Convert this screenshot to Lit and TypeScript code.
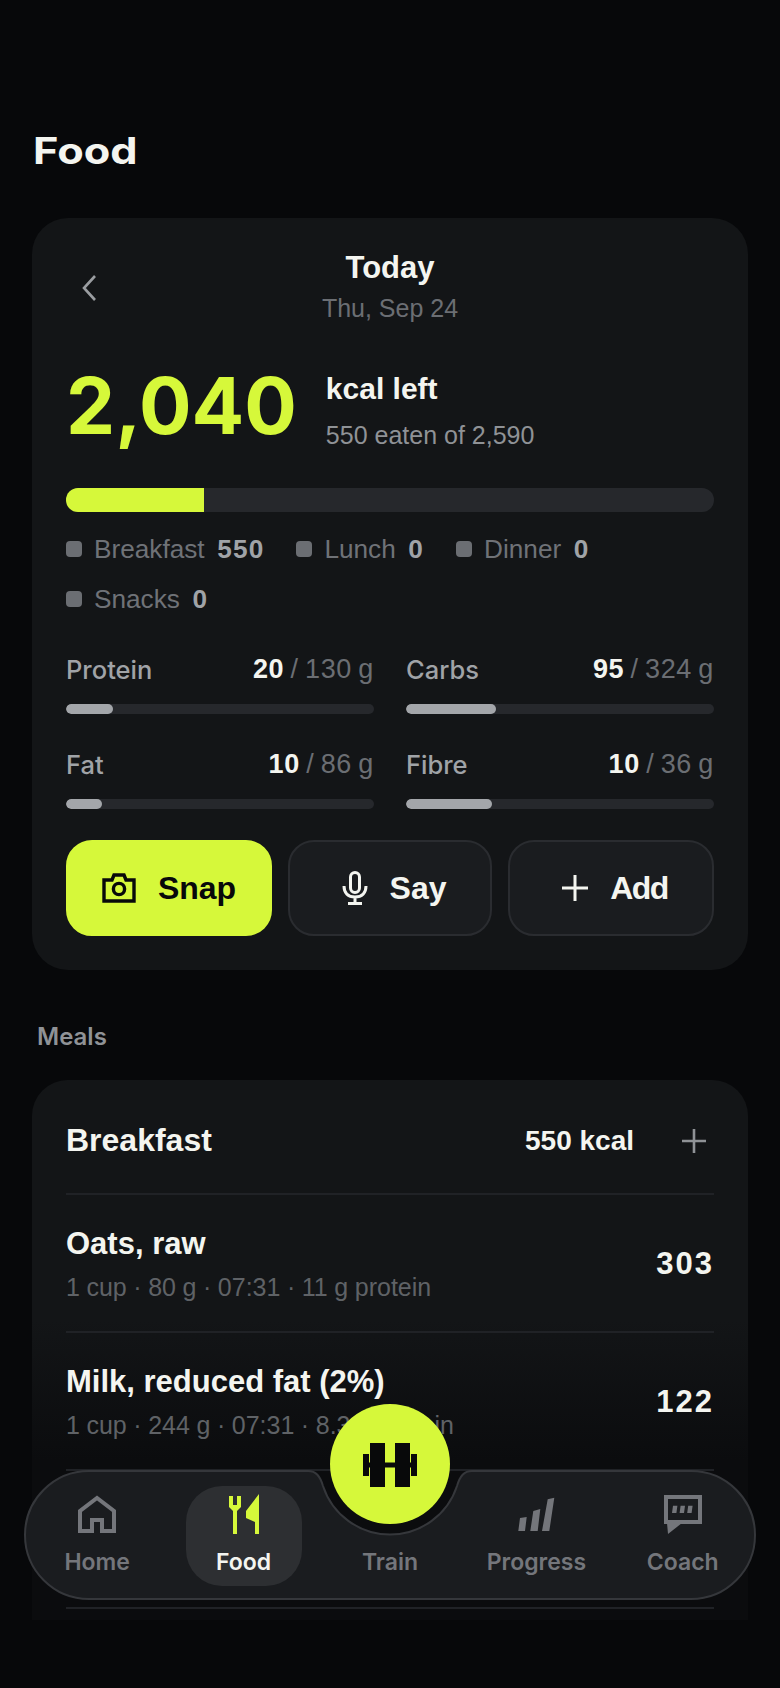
import { LitElement, css, html, svg } from "lit";
import { customElement } from "lit/decorators.js";

const macros = [
  { name: "Protein", value: 20, goal: 130 },
  { name: "Carbs", value: 95, goal: 324 },
  { name: "Fat", value: 10, goal: 86 },
  { name: "Fibre", value: 10, goal: 36 },
];

const legend = [
  { name: "Breakfast", kcal: 550 },
  { name: "Lunch", kcal: 0 },
  { name: "Dinner", kcal: 0 },
  { name: "Snacks", kcal: 0 },
];

const foods = [
  { name: "Oats, raw", sub: "1 cup · 80 g · 07:31 · 11 g protein", kcal: 303 },
  { name: "Milk, reduced fat (2%)", sub: "1 cup · 244 g · 07:31 · 8.3 g protein", kcal: 122 },
];

const icons = {
  home: svg`<path d="M2 36V16L19 3L36 16V36H24V25H14V36Z" fill="none" stroke="currentColor" stroke-width="4"/>`,
  food: svg`<path d="M0 2H4V11H8V2H12V13L8 17V40H4V17L0 13Z M30 0V40H26V28L17 24V17Z" fill="currentColor"/>`,
  progress: svg`<path d="M2 21L8.7 20L7 34H.3Z M15.3 14L22.3 12L19.7 34H12.3Z M29.7 2.3L36.3 .7L31.3 34H24Z" fill="currentColor"/>`,
  coach: svg`<path d="M2 2H36V27H2Z" fill="none" stroke="currentColor" stroke-width="4"/><path d="M3 28H18L4 39Z M9 10.7H13.4L12.4 18H8Z M16.6 10.7H21L20 18H15.6Z M24.2 10.7H28.6L27.6 18H23.2Z" fill="currentColor"/>`,
};

const tabs = [
  { label: "Home", icon: icons.home, w: 38, h: 38 },
  { label: "Food", icon: icons.food, w: 30, h: 40, active: true },
  { label: "Train" },
  { label: "Progress", icon: icons.progress, w: 37, h: 34 },
  { label: "Coach", icon: icons.coach, w: 38, h: 39 },
];

@customElement("app-root")
export class AppRoot extends LitElement {
  static styles = css`
    :host {
      display: block;
      width: 780px;
      height: 1688px;
      overflow: hidden;
      position: relative;
      background: #07080a;
      font-family: "Liberation Sans", Arial, sans-serif;
      color: #f4f5f0;
    }
    .scroll {
      height: 1620px;
      overflow: hidden;
      padding: 0 32px;
      box-sizing: border-box;
    }
    h1 {
      margin: 0;
      padding: 129px 0 0 1px;
      height: 89px;
    }
    h1 span {
      display: inline-block;
      font: 700 37px/43px Inter, sans-serif;
      transform: scaleX(1.17);
      transform-origin: left;
    }
    .card {
      background: #131517;
      border-radius: 36px;
    }
    .summary {
      padding: 31px 34px 32px;
      height: 752px;
      box-sizing: border-box;
    }
    .day {
      position: relative;
      text-align: center;
      height: 90px;
    }
    .day svg {
      position: absolute;
      left: 13px;
      top: 25px;
    }
    .day b {
      display: block;
      font-size: 31px;
      line-height: 38px;
    }
    .day span {
      display: block;
      font-size: 25px;
      line-height: 42px;
      color: #6b6e73;
    }
    .left {
      display: flex;
      gap: 29px;
      margin-top: 19px;
      height: 130px;
    }
    .big {
      font: 700 78px/96px Inter, sans-serif;
      color: #d6f83a;
    }
    .left b {
      display: block;
      font-size: 30px;
      line-height: 34px;
      margin-top: 14px;
    }
    .left span {
      display: block;
      font-size: 25px;
      line-height: 30px;
      margin-top: 14px;
      color: #8f9296;
    }
    .bar {
      height: 24px;
      border-radius: 12px;
      background: #26282c;
      overflow: hidden;
    }
    .bar i {
      display: block;
      height: 100%;
      background: #d6f83a;
    }
    .legend {
      display: flex;
      flex-wrap: wrap;
      gap: 0 32px;
      margin-top: 12px;
    }
    .legend div {
      display: flex;
      align-items: center;
      height: 50px;
      font-size: 26.2px;
      color: #6f7277;
    }
    .legend i {
      width: 16px;
      height: 16px;
      border-radius: 4px;
      background: #6b6e73;
      margin-right: 12px;
    }
    .legend b {
      margin-left: 12.5px;
      color: #a0a3a7;
      letter-spacing: 1.2px;
    }
    .macros {
      display: grid;
      grid-template-columns: 308px 308px;
      column-gap: 32px;
      margin-top: 29px;
    }
    .macro {
      height: 95px;
    }
    .macro-head {
      display: flex;
      justify-content: space-between;
      align-items: center;
      height: 32px;
      font: 500 25.5px Inter, sans-serif;
      color: #a0a3a7;
    }
    .macro-head span {
      font: 400 27px "Liberation Sans", sans-serif;
      word-spacing: -2px;
      letter-spacing: 0.7px;
      color: #6b6e73;
    }
    .macro-head b {
      color: #f4f5f0;
    }
    .track {
      height: 10px;
      border-radius: 5px;
      background: #26282c;
      margin-top: 19px;
      overflow: hidden;
    }
    .track i {
      display: block;
      height: 100%;
      border-radius: 5px;
      background: #a3a6aa;
    }
    .actions {
      display: flex;
      gap: 16px;
      margin-top: -3px;
    }
    .action {
      flex: 1 1 206px;
      height: 96px;
      box-sizing: border-box;
      border: 2px solid #2a2c30;
      border-radius: 26px;
      background: #1a1c1f;
      display: flex;
      align-items: center;
      justify-content: center;
      gap: 22px;
      font-size: 32px;
      font-weight: 700;
    }
    .action.primary {
      background: #d6f83a;
      border-color: #d6f83a;
      color: #08090a;
    }
    .action.say {
      flex-basis: 204px;
      padding-left: 8px;
    }
    .action.add {
      padding-left: 8px;
      letter-spacing: -1.5px;
    }
    h2 {
      margin: 0;
      padding: 52px 0 0 5px;
      height: 110px;
      box-sizing: border-box;
      font: 600 24px/30px Inter, sans-serif;
      color: #8f9296;
    }
    .meals {
      padding: 0 34px;
      height: 800px;
      box-sizing: border-box;
      background: linear-gradient(#131517 0, #131517 240px, #0b0c0e 380px);
    }
    .meal-head {
      display: flex;
      align-items: center;
      height: 115px;
      padding-top: 8px;
      box-sizing: border-box;
      border-bottom: 2px solid #202226;
    }
    .meal-head b {
      font-size: 32px;
      flex: 1;
    }
    .meal-head span {
      font-size: 28px;
      font-weight: 700;
      margin-right: 48px;
    }
    .meal-head svg {
      margin-right: 8px;
    }
    .food {
      display: flex;
      align-items: center;
      justify-content: space-between;
      height: 138px;
      box-sizing: border-box;
      border-bottom: 2px solid #202226;
    }
    .food b {
      display: block;
      font-size: 31px;
      line-height: 38px;
    }
    .food span {
      display: block;
      margin-top: 9px;
      font-size: 25px;
      line-height: 30px;
      word-spacing: -0.4px;
      color: #5f6266;
    }
    .food em {
      font-style: normal;
      font-weight: 700;
      font-size: 31px;
      letter-spacing: 2px;
      margin-top: 2px;
    }
    nav {
      position: absolute;
      left: 0;
      top: 1470px;
      width: 780px;
      height: 130px;
    }
    nav > svg {
      position: absolute;
      inset: 0;
    }
    .tabs {
      position: absolute;
      left: 24px;
      right: 24px;
      top: 16px;
      display: grid;
      grid-template-columns: repeat(5, 1fr);
      justify-items: center;
    }
    .tab {
      width: 116px;
      height: 100px;
      border-radius: 36px;
      display: flex;
      flex-direction: column;
      align-items: center;
      color: #74767b;
      font: 600 23px/26px Inter, sans-serif;
    }
    .tab.active {
      background: #2d2f32;
      color: #f4f5f0;
    }
    .tab.active svg {
      color: #d6f83a;
    }
    .slot {
      height: 56px;
      display: flex;
      align-items: center;
      justify-content: center;
      flex: none;
    }
    .tab label {
      margin-top: 7px;
    }
    .fab {
      position: absolute;
      left: 330px;
      top: 1404px;
      width: 120px;
      height: 120px;
      border-radius: 50%;
      background: #d6f83a;
      display: flex;
      align-items: center;
      justify-content: center;
    }
    .fab svg {
      margin: 2px 1px 0 0;
    }
  `;

  render() {
    return html`
      <div class="scroll">
        <h1><span>Food</span></h1>
        <section class="card summary">
          <div class="day">
            <svg width="20" height="28" viewBox="0 0 20 28" fill="none" stroke="#9a9da1" stroke-width="2.6"><path d="M16 2L5 14L16 26"/></svg>
            <b>Today</b>
            <span>Thu, Sep 24</span>
          </div>
          <div class="left">
            <div class="big">2,040</div>
            <div><b>kcal left</b><span>550 eaten of 2,590</span></div>
          </div>
          <div class="bar"><i style="width:${(550 / 2590) * 100}%"></i></div>
          <div class="legend">
            ${legend.map((l) => html`<div><i></i>${l.name}<b>${l.kcal}</b></div>`)}
          </div>
          <div class="macros">
            ${macros.map(
              (m) => html`<div class="macro">
                <div class="macro-head">${m.name}<span><b>${m.value}</b> / ${m.goal} g</span></div>
                <div class="track"><i style="width:${(m.value / m.goal) * 100}%"></i></div>
              </div>`
            )}
          </div>
          <div class="actions">
            <div class="action primary">
              <svg width="34" height="30" viewBox="0 0 34 30" fill="none" stroke="currentColor" stroke-width="3.4"><path d="M2 7H10L12 2H22L24 7H32V28H2Z"/><circle cx="17" cy="16" r="5.6"/></svg>
              Snap
            </div>
            <div class="action say">
              <svg width="26" height="34" viewBox="0 0 26 34" fill="none" stroke="currentColor" stroke-width="3"><rect x="8.5" y="1.5" width="9" height="20" rx="4.5"/><path d="M2 15C2 22 6 26 13 26C20 26 24 22 24 15M13 26V32M6 32.5H20"/></svg>
              Say
            </div>
            <div class="action add">
              <svg width="26" height="26" viewBox="0 0 26 26" fill="none" stroke="currentColor" stroke-width="3"><path d="M13 0V26M0 13H26"/></svg>
              Add
            </div>
          </div>
        </section>
        <h2>Meals</h2>
        <section class="card meals">
          <div class="meal-head">
            <b>Breakfast</b><span>550 kcal</span>
            <svg width="24" height="24" viewBox="0 0 24 24" fill="none" stroke="#8f9296" stroke-width="2.6"><path d="M12 0V24M0 12H24"/></svg>
          </div>
          ${foods.map(
            (f) => html`<div class="food">
              <div><b>${f.name}</b><span>${f.sub}</span></div>
              <em>${f.kcal}</em>
            </div>`
          )}
          <div class="food"></div>
        </section>
      </div>
      <nav>
        <svg width="780" height="130" viewBox="0 0 780 130"><path d="M89 1H308C316 1 320 6 323 16A70.5 70.5 0 0 0 457 16C460 6 464 1 472 1H691A64 64 0 0 1 691 129H89A64 64 0 0 1 89 1Z" fill="#1a1c1f" stroke="#35373b" stroke-width="2"/></svg>
        <div class="tabs">
          ${tabs.map(
            (t) => html`<div class="tab ${t.active ? "active" : ""}">
              <div class="slot">
                ${t.icon
                  ? html`<svg width=${t.w} height=${t.h} viewBox="0 0 ${t.w} ${t.h}">${t.icon}</svg>`
                  : ""}
              </div>
              <label>${t.label}</label>
            </div>`
          )}
        </div>
      </nav>
      <div class="fab">
        <svg width="54" height="44" viewBox="0 0 54 44" fill="#08090a"><path d="M0 11H6V33H0Z M7 0H22V44H7Z M32 0H47V44H32Z M48 11H54V33H48Z M22 19.5H32V24.5H22Z M6 19.5H7V24.5H6Z M47 19.5H48V24.5H47Z"/></svg>
      </div>
    `;
  }
}
